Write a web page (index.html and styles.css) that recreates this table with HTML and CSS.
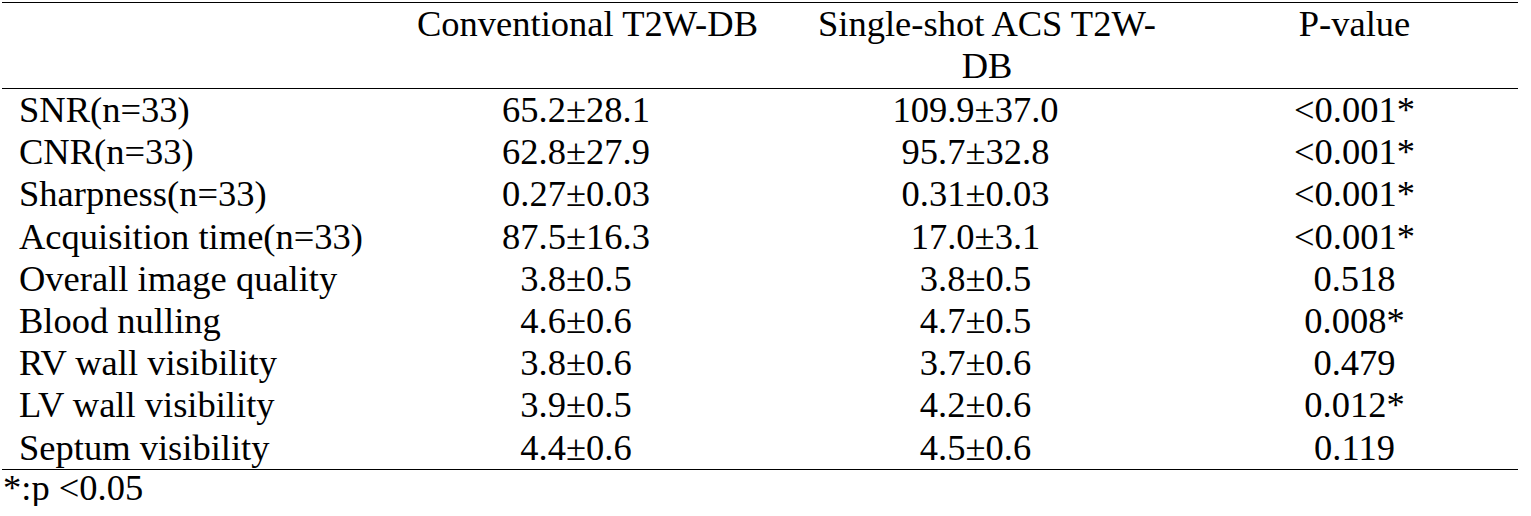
FILE: index.html
```html
<!DOCTYPE html>
<html lang="en">
<head>
<meta charset="utf-8">
<title>Table</title>
<link rel="stylesheet" href="styles.css">
</head>
<body>
<table class="data">
  <colgroup>
    <col class="c1"><col class="c2"><col class="c3"><col class="c4">
  </colgroup>
  <thead>
    <tr>
      <th class="label"></th>
      <th>Conventional T2W-DB</th>
      <th>Single-shot ACS T2W-<br>DB</th>
      <th>P-value</th>
    </tr>
  </thead>
  <tbody>
    <tr><td class="label">SNR(n=33)</td><td class="v">65.2±28.1</td><td class="v">109.9±37.0</td><td class="p">&lt;0.001*</td></tr>
    <tr><td class="label">CNR(n=33)</td><td class="v">62.8±27.9</td><td class="v">95.7±32.8</td><td class="p">&lt;0.001*</td></tr>
    <tr><td class="label">Sharpness(n=33)</td><td class="v">0.27±0.03</td><td class="v">0.31±0.03</td><td class="p">&lt;0.001*</td></tr>
    <tr><td class="label">Acquisition time(n=33)</td><td class="v">87.5±16.3</td><td class="v">17.0±3.1</td><td class="p">&lt;0.001*</td></tr>
    <tr><td class="label">Overall image quality</td><td class="v">3.8±0.5</td><td class="v">3.8±0.5</td><td class="p">0.518</td></tr>
    <tr><td class="label">Blood nulling</td><td class="v">4.6±0.6</td><td class="v">4.7±0.5</td><td class="p">0.008*</td></tr>
    <tr><td class="label">RV wall visibility</td><td class="v">3.8±0.6</td><td class="v">3.7±0.6</td><td class="p">0.479</td></tr>
    <tr><td class="label">LV wall visibility</td><td class="v">3.9±0.5</td><td class="v">4.2±0.6</td><td class="p">0.012*</td></tr>
    <tr><td class="label">Septum visibility</td><td class="v">4.4±0.6</td><td class="v">4.5±0.6</td><td class="p">0.119</td></tr>
  </tbody>
</table>
<p class="note">*:p &lt;0.05</p>
</body>
</html>
```

FILE: styles.css
```css
html, body {
  margin: 0;
  padding: 0;
  background: #ffffff;
}

body {
  font-family: "Liberation Serif", "Times New Roman", serif;
  font-size: 36.5px;
  color: #000000;
  padding: 2px 0 0 2px;
}

.data {
  border-collapse: collapse;
  table-layout: fixed;
  width: 1516px;
  border-top: 1px solid #000;
  border-bottom: 1px solid #000;
}

.c1 { width: 390px; }
.c2 { width: 391px; }
.c3 { width: 408px; }
.c4 { width: 327px; }

.data th,
.data td {
  padding: 0;
  font-weight: normal;
  text-align: center;
  white-space: nowrap;
  vertical-align: top;
}

.data th {
  line-height: 42px;
  padding-bottom: 1px;
  border-bottom: 1px solid #000;
}

.data td {
  line-height: 42.2px;
}

.data .label {
  text-align: left;
  padding-left: 17px;
}

.data .v {
  padding-right: 23px;
}

.note {
  margin: 0;
  padding-left: 1px;
  line-height: 36px;
}
```
